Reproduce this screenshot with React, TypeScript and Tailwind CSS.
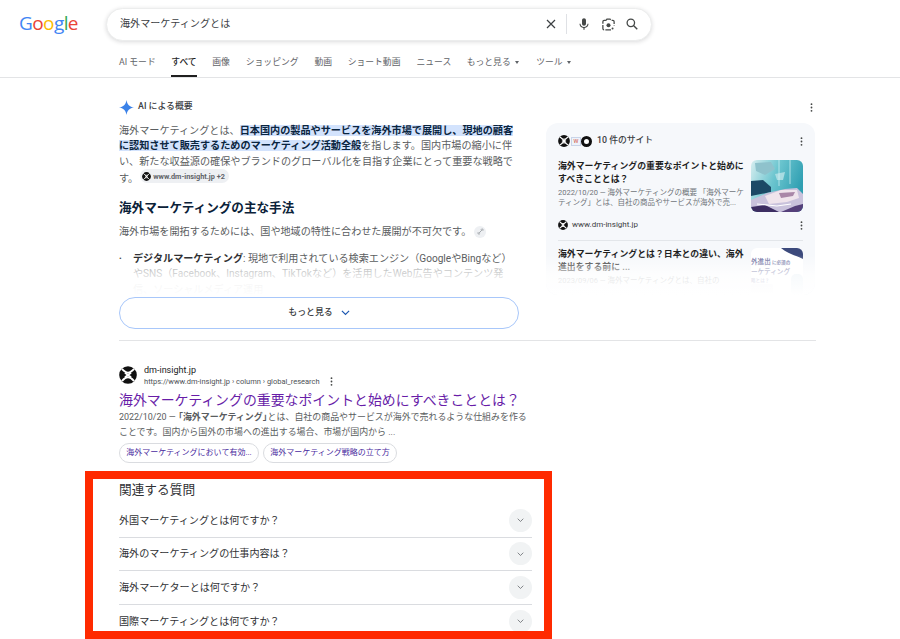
import React from "react";

const FONT = "font-['Roboto','Liberation_Sans','Noto_Sans_CJK_JP',sans-serif]";

function DmLogo({ size = 18, className = "" }: { size?: number; className?: string }) {
  return (
    <svg width={size} height={size} viewBox="0 0 20 20" className={`shrink-0 ${className}`}>
      <circle cx="10" cy="10" r="9.8" fill="#111" />
      <path d="M3.2 3.2 C6.5 6.8 7.5 7.4 10 7.4 C12.5 7.4 13.5 6.8 16.8 3.2 M3.2 16.8 C6.5 13.2 7.5 12.6 10 12.6 C12.5 12.6 13.5 13.2 16.8 16.8" fill="none" stroke="#fff" strokeWidth="2.2" />
      <path d="M6.6 7.5 L13.4 12.5 M13.4 7.5 L6.6 12.5" stroke="#fff" strokeWidth="2" />
    </svg>
  );
}

function Dots({ className = "" }: { className?: string }) {
  return (
    <svg width="3" height="9" viewBox="0 0 3 9" className={className}>
      <circle cx="1.5" cy="1.2" r="0.9" fill="#444746" />
      <circle cx="1.5" cy="4.5" r="0.9" fill="#444746" />
      <circle cx="1.5" cy="7.8" r="0.9" fill="#444746" />
    </svg>
  );
}

function Chevron({ color = "#5f6368", w = 9, sw = 1.2 }: { color?: string; w?: number; sw?: number }) {
  return (
    <svg width={w} height={w * 0.6} viewBox="0 0 10 6">
      <path d="M1 1 L5 5 L9 1" fill="none" stroke={color} strokeWidth={sw} />
    </svg>
  );
}

function Caret() {
  return <span className="inline-block ml-[4px] mb-[1px] w-0 h-0 border-x-[2.5px] border-x-transparent border-t-[3px] border-t-[#5f6368]" />;
}

function Thumb1() {
  return (
    <svg width="52" height="52" viewBox="0 0 52 52" className="rounded-[6px] shrink-0">
      <defs>
        <linearGradient id="a" x1="0" y1="0" x2="1" y2="0.4">
          <stop offset="0" stopColor="#d8eef0" />
          <stop offset="0.5" stopColor="#6cc5cf" />
          <stop offset="1" stopColor="#2f9fb2" />
        </linearGradient>
        <filter id="b"><feGaussianBlur stdDeviation="0.7" /></filter>
      </defs>
      <rect width="52" height="52" fill="url(#a)" />
      <g filter="url(#b)">
        <path d="M4 3 L20 2 L24 9 L14 15 L5 11Z" fill="#8fc2cc" />
        <path d="M24 14 L34 12 L32 20 L26 20Z" fill="#a9dce2" />
        <path d="M0 21 L12 20 L20 27 L20 32 L0 36Z" fill="#1c4a66" />
        <path d="M28 0 V26 M39 0 V24" stroke="#d8f3f6" strokeWidth="0.7" />
        <path d="M0 52 L0 40 L16 33 L34 29 L46 28 L52 34 L52 44 L40 52Z" fill="#c9c2dc" />
        <path d="M14 36 L30 30 L46 30 L48 38 L36 42 L18 44Z" fill="#efe4ec" />
        <path d="M28 33 L44 32 L42 36 L30 38Z" fill="#a987a8" />
        <path d="M0 52 L0 47 L14 45 L28 52Z" fill="#3c2d62" />
        <path d="M30 52 L44 46 L52 44 V52Z" fill="#54417a" />
        <path d="M6 44 L26 46 L40 44" stroke="#ffffff" strokeWidth="1.2" fill="none" />
      </g>
    </svg>
  );
}

function Thumb2() {
  return (
    <div className="relative w-[52px] h-[52px] overflow-hidden rounded-[6px] bg-white shrink-0">
      <svg width="52" height="52" viewBox="0 0 52 52" className="absolute inset-0">
        <path d="M30 0 H52 V11 C44 7 37 6 30 0Z" fill="#3c4a7c" />
        <rect x="40" y="26" width="12" height="22" rx="5" fill="#d7e6f0" />
        <rect x="0" y="36" width="22" height="10" rx="2" fill="#ececf1" />
      </svg>
      <div className="absolute left-0 top-[10px] text-[6.6px] leading-[8.5px] font-bold text-[#6d6f9f] whitespace-nowrap">
        外進出<span className="text-[4.6px]"> に必須の</span>
        <br />
        ーケティング
        <br />
        <span className="text-[4.6px]">略とは？</span>
      </div>
    </div>
  );
}

function Question({ text, last }: { text: string; last?: boolean }) {
  return (
    <div className={`flex items-center justify-between h-[33.5px] ${last ? "" : "border-b border-[#dadce0]"}`}>
      <span className="text-[10.1px] text-[#303134]">{text}</span>
      <span className="flex items-center justify-center w-[23px] h-[23px] rounded-full bg-[#f1f3f4]">
        <Chevron w={7} sw={1.1} />
      </span>
    </div>
  );
}

export default function App() {
  return (
    <div className={`relative w-[900px] h-[639px] overflow-hidden bg-white ${FONT}`}>
      {/* Header */}
      <header className="h-[78px] border-b border-[#e3e4e6]">
        <div className="flex items-center h-[48px]">
          <div className="w-[106px] pl-[19px] text-[19px] leading-none tracking-[-0.6px] font-['Open_Sans',sans-serif] mt-[-2px]">
            <span className="text-[#4285f4]">G</span>
            <span className="text-[#ea4335]">o</span>
            <span className="text-[#fbbc05]">o</span>
            <span className="text-[#4285f4]">g</span>
            <span className="text-[#34a853]">l</span>
            <span className="text-[#ea4335]">e</span>
          </div>
          <div className="flex items-center w-[546px] h-[33px] rounded-full bg-white border border-[#eceded] shadow-[0_1px_4px_rgba(32,33,36,0.16)] pl-[13px] pr-[12px]">
            <span className="flex-1 text-[10.1px] text-[#3c4043]">海外マーケティングとは</span>
            <svg width="12" height="12" viewBox="0 0 12 12" className="mr-[9px]">
              <path d="M2 2 L10 10 M10 2 L2 10" stroke="#3c4043" strokeWidth="1.2" />
            </svg>
            <span className="w-px h-[20px] bg-[#dfe1e5] mr-[10px]" />
            <svg width="14" height="14" viewBox="0 0 24 24" className="mr-[10px]">
              <path fill="#444746" d="M12 15c1.9 0 3.4-1.5 3.4-3.4V5.4C15.4 3.5 13.9 2 12 2S8.6 3.5 8.6 5.4v6.2c0 1.9 1.5 3.4 3.4 3.4zM18 11.4c0 3.3-2.7 5.6-6 5.6s-6-2.3-6-5.6H4.2c0 3.9 3 6.9 6.8 7.4V22h2v-3.2c3.8-.5 6.8-3.5 6.8-7.4H18z" />
            </svg>
            <svg width="15" height="15" viewBox="0 0 24 24" className="mr-[9px]">
              <circle cx="12" cy="13" r="3.2" fill="#444746" />
              <circle cx="18.5" cy="18.5" r="1.6" fill="#444746" />
              <path d="M8 5.5 L9.5 3.5 H14.5 L16 5.5 H19 C20.5 5.5 21 6.5 21 7.5 V14 M16 20.5 H5 C3.5 20.5 3 19.5 3 18.5 V7.5 C3 6.5 3.5 5.5 5 5.5 H8" fill="none" stroke="#444746" strokeWidth="2" strokeDasharray="9 2" />
            </svg>
            <svg width="14" height="14" viewBox="0 0 24 24">
              <circle cx="10" cy="10" r="6.4" fill="none" stroke="#444746" strokeWidth="2.2" />
              <path d="M15 15 L21 21" stroke="#444746" strokeWidth="2.4" />
            </svg>
          </div>
        </div>
        <nav className="flex items-center gap-[15.5px] pl-[119px] h-[29px] text-[8.8px] text-[#5f6368]">
          <span>AI モード</span>
          <span className="relative text-[#1f1f1f] font-medium flex items-center h-full">
            すべて
            <span className="absolute left-0 right-0 bottom-0 h-[2px] bg-[#1f1f1f]" />
          </span>
          <span>画像</span>
          <span className="ml-[0.5px]">ショッピング</span>
          <span className="ml-[0.5px]">動画</span>
          <span>ショート動画</span>
          <span className="ml-[0.5px]">ニュース</span>
          <span>もっと見る<Caret /></span>
          <span className="ml-[2px]">ツール<Caret /></span>
        </nav>
      </header>

      {/* Body */}
      <main className="pl-[119px] w-[816px] pt-[21px]">
        <div className="flex items-center gap-[4px] h-[16px] pr-[3px]">
          <svg width="15" height="15" viewBox="0 0 24 24">
            <path d="M12 0 C13 7 17 11 24 12 C17 13 13 17 12 24 C11 17 7 13 0 12 C7 11 11 7 12 0Z" fill="#3b82e8" />
          </svg>
          <span className="flex-1 text-[8.9px] font-medium text-[#3c4043]">AI による概要</span>
          <Dots />
        </div>

        <div className="flex justify-between mt-[7px]">
          {/* Left AI text */}
          <div className="w-[400px]">
            <p className="w-[398px] text-[10.15px] leading-[15.4px] text-[#5a5d60] pt-[1px]">
              海外マーケティングとは、
              <span className="bg-[#d3e3fd] font-bold text-[#0a2540]">日本国内の製品やサービスを海外市場で展開し、現地の顧客に認知させて販売するためのマーケティング活動全般</span>
              を指します。国内市場の縮小に伴い、新たな収益源の確保やブランドのグローバル化を目指す企業にとって重要な戦略です。
              <span className="inline-flex items-center gap-[2px] ml-[2px] h-[14px] px-[2px] pr-[4px] rounded-full bg-[#eef0f3] align-[1px] text-[7.3px] font-bold leading-none text-[#5f6368]">
                <DmLogo size={9} />
                www.dm-insight.jp +2
              </span>
            </p>
            <h2 className="mt-[13px] text-[12.6px] leading-[18px] font-bold text-[#0b2239]">海外マーケティングの主な手法</h2>
            <p className="mt-[7px] flex items-center text-[10.1px] leading-[15px] text-[#5a5d60]">
              海外市場を開拓するためには、国や地域の特性に合わせた展開が不可欠です。
              <span className="ml-[3px] flex items-center justify-center w-[12px] h-[12px] rounded-full bg-[#eef0f3]">
                <svg width="7" height="7" viewBox="0 0 10 10">
                  <path d="M3 7 L7 3 M2 6 L1.5 6.5 C0.5 7.5 2.5 9.5 3.5 8.5 L4.5 7.5 M5.5 2.5 L6.5 1.5 C7.5 0.5 9.5 2.5 8.5 3.5 L8 4" fill="none" stroke="#80868b" strokeWidth="1" />
                </svg>
              </span>
            </p>
            <div className="relative h-[46px] mt-[12px] overflow-hidden">
              <div className="flex">
                <span className="w-[14px] text-[8px] leading-[15px] text-[#474747] shrink-0">•</span>
                <p className="w-[384px] text-[10.1px] leading-[15.2px] text-[#5a5d60]">
                  <b className="font-bold text-[#303134]">デジタルマーケティング</b>: 現地で利用されている検索エンジン（GoogleやBingなど）やSNS（Facebook、Instagram、TikTokなど）を活用したWeb広告やコンテンツ発信、ソーシャルメディア運用
                </p>
              </div>
              <div className="absolute left-0 right-0 top-[15px] bottom-0 bg-gradient-to-b from-[rgba(255,255,255,0.55)] via-[rgba(255,255,255,0.92)] to-white" />
            </div>
            <button className="flex items-center justify-center gap-[8px] w-[400px] h-[32px] rounded-full border border-[#a8c7fa] bg-white text-[8.9px] font-medium text-[#3c4043]">
              もっと見る
              <Chevron color="#1a56b0" w={9} sw={1.3} />
            </button>
          </div>

          {/* Sources panel */}
          <aside className="relative w-[269px] h-[172px] mt-[1px] mr-[1px] rounded-[12px] bg-[#f6f8fb] px-[12px] pt-[11px] overflow-hidden">
            <div className="flex items-center h-[14px]">
              <DmLogo size={12} />
              <span className="w-[10px] h-[9px] ml-[1px] bg-[#eef3fb] border border-[#c9d4e8] text-[5.5px] leading-[7px] text-center text-[#d04a3a]">W</span>
              <span className="w-[11px] h-[11px] rounded-full border-[3px] border-[#111] bg-white" />
              <span className="ml-[5px] flex-1 text-[8.8px] text-[#3c4043] font-medium">10 件のサイト</span>
              <Dots />
            </div>
            <div className="flex justify-between mt-[12px]">
              <div className="w-[190px]">
                <div className="text-[8.9px] leading-[13px] font-bold text-[#1f1f1f]">海外マーケティングの重要なポイントと始めにすべきこととは？</div>
                <div className="mt-[2px] text-[7.5px] leading-[10.4px] h-[21px] overflow-hidden text-[#70757a]">2022/10/20 — 海外マーケティングの概要 「海外マーケティング」とは、自社の商品やサービスが海外で売...</div>
              </div>
              <Thumb1 />
            </div>
            <div className="flex items-center h-[14px] mt-[6px]">
              <DmLogo size={10} />
              <span className="ml-[4px] flex-1 text-[8px] text-[#3c4043]">www.dm-insight.jp</span>
              <Dots />
            </div>
            <div className="h-px bg-[#e3e6ea] mt-[8px]" />
            <div className="flex justify-between mt-[7px]">
              <div className="w-[190px]">
                <div className="text-[8.9px] leading-[13px] font-bold text-[#1f1f1f]">海外マーケティングとは？日本との違い、海外進出をする前に ...</div>
                <div className="mt-[2px] text-[7.5px] leading-[10.4px] text-[#70757a]">2023/09/06 — 海外マーケティングとは、自社の</div>
              </div>
              <Thumb2 />
            </div>
            <div className="absolute left-0 right-0 bottom-0 h-[40px] bg-gradient-to-b from-[rgba(255,255,255,0)] via-[rgba(255,255,255,0.8)] to-white" />
          </aside>
        </div>

        <div className="h-px bg-[#e3e4e6] mt-[11px] w-[697px]" />

        {/* Result */}
        <section className="mt-[21px] w-[416px]">
          <div className="flex items-center h-[26px]">
            <DmLogo size={18} />
            <div className="ml-[7px]">
              <div className="text-[9px] leading-[12px] text-[#202124]">dm-insight.jp</div>
              <div className="flex items-center text-[7.5px] leading-[11px] text-[#4d5156]">
                https://www.dm-insight.jp › column › global_research
                <Dots className="ml-[10px]" />
              </div>
            </div>
          </div>
          <h3 className="mt-[2px] text-[13.9px] leading-[20px] text-[#681da8] whitespace-nowrap">海外マーケティングの重要なポイントと始めにすべきこととは？</h3>
          <p className="mt-0 w-[416px] text-[8.95px] leading-[15px] text-[#5a5d60]">
            2022/10/20 — <b className="font-bold ml-[-4px] mr-[-4px]">「海外マーケティング」</b>とは、自社の商品やサービスが海外で売れるような仕組みを作ることです。国内から国外の市場への進出する場合、市場が国内から ...
          </p>
          <div className="flex gap-[4px] mt-[3px]">
            <span className="flex items-center justify-center w-[140px] h-[20px] rounded-full border border-[#dadce0] text-[8px] text-[#4a2ba0]">海外マーケティングにおいて有効...</span>
            <span className="flex items-center justify-center w-[134px] h-[20px] rounded-full border border-[#dadce0] text-[8px] text-[#4a2ba0]">海外マーケティング戦略の立て方</span>
          </div>
        </section>

        {/* Related questions */}
        <section className="mt-[18px] w-[413px]">
          <h2 className="text-[12.7px] leading-[18px] text-[#303134]">関連する質問</h2>
          <div className="mt-[5px]">
            <Question text="外国マーケティングとは何ですか？" />
            <Question text="海外のマーケティングの仕事内容は？" />
            <Question text="海外マーケターとは何ですか？" />
            <Question text="国際マーケティングとは何ですか？" last />
          </div>
        </section>
      </main>

      {/* Red annotation frame */}
      <div className="absolute left-[85px] top-[471px] w-[467px] h-[168px] border-[8px] border-[#ff2a00]" />
    </div>
  );
}
